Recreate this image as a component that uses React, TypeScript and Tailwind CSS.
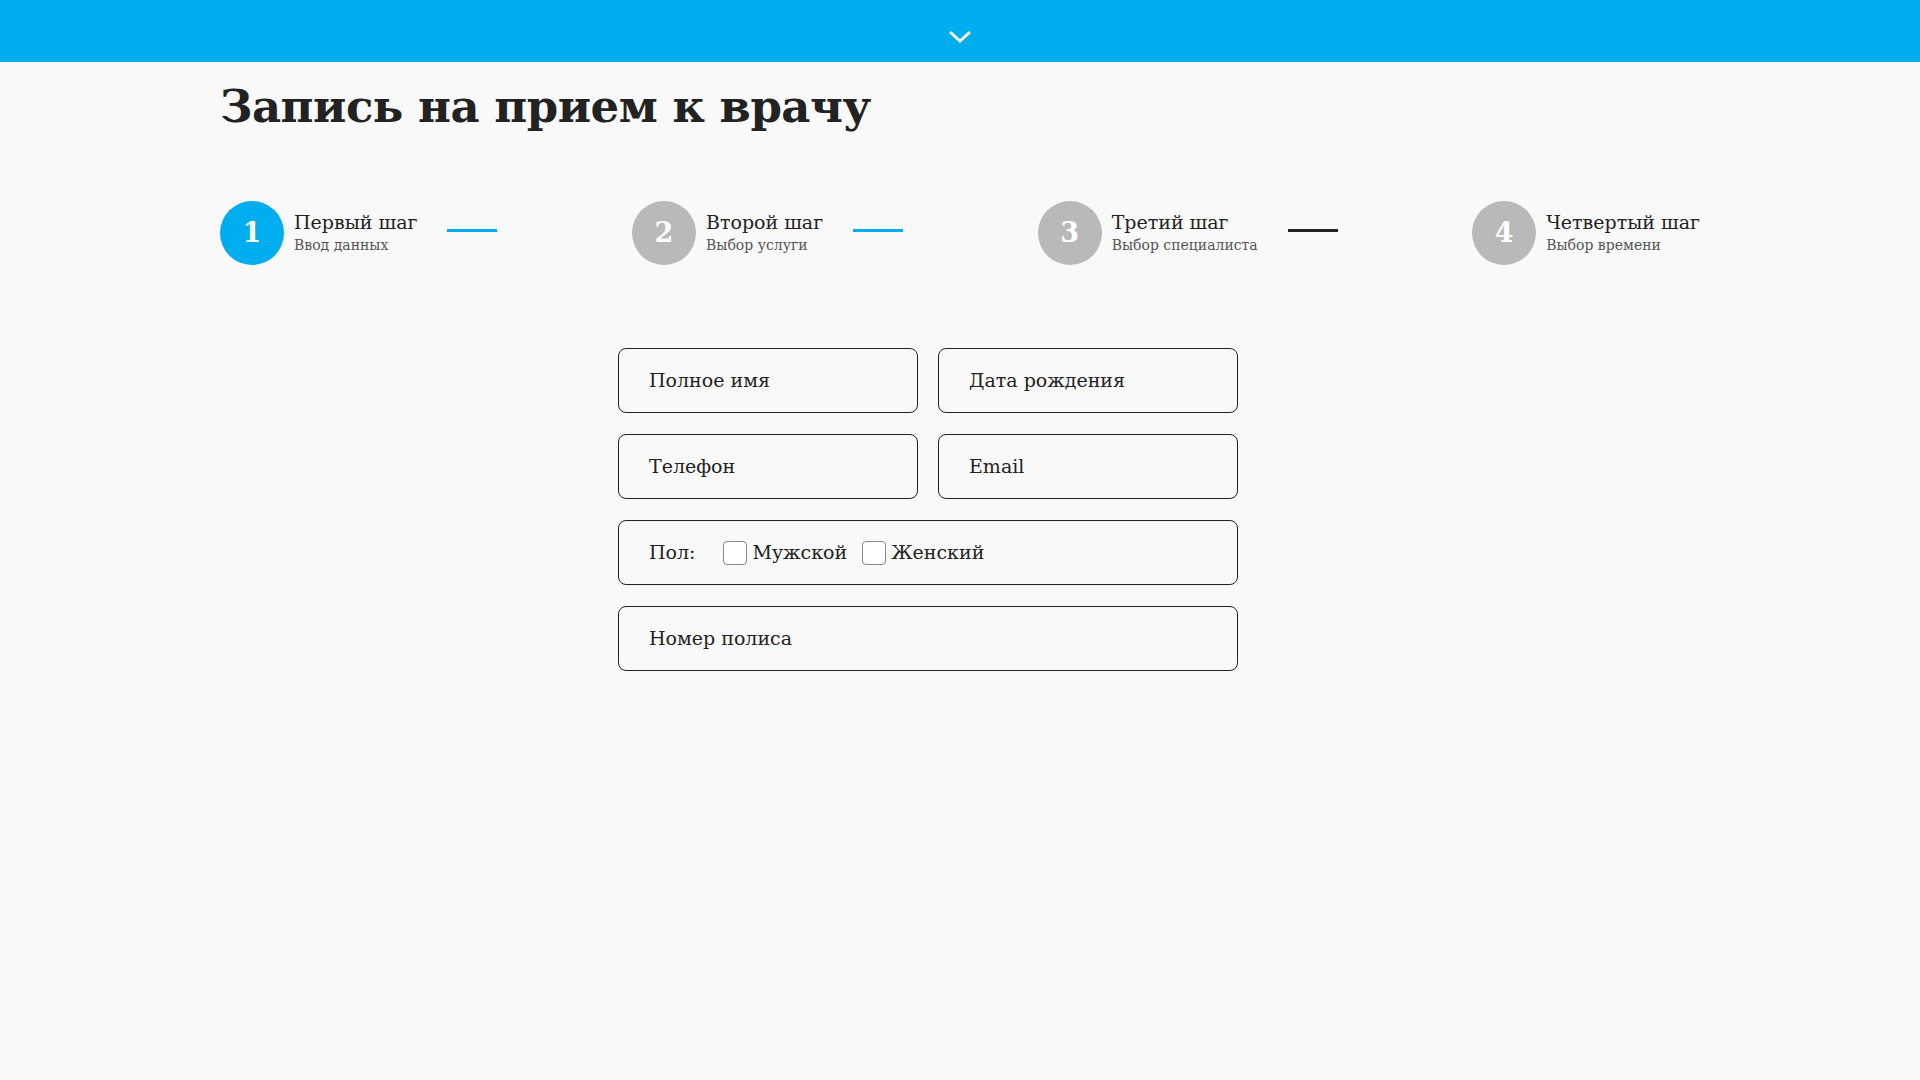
import { useState } from 'react'

const steps = [
    { n: 1, title: 'Первый шаг', sub: 'Ввод данных', line: 'blue' },
    { n: 2, title: 'Второй шаг', sub: 'Выбор услуги', line: 'blue' },
    { n: 3, title: 'Третий шаг', sub: 'Выбор специалиста', line: 'dark' },
    { n: 4, title: 'Четвертый шаг', sub: 'Выбор времени', line: null },
]

const slab = { fontFamily: '"DejaVu Serif", "Liberation Serif", serif' }

function Field({ label, wide }: { label: string; wide?: boolean }) {
    return (
        <div
            className={`flex h-[65px] items-center rounded-lg border border-[#222] pl-[30px] text-[19px] text-[#222] ${wide ? 'col-span-2' : ''}`}
        >
            {label}
        </div>
    )
}

export default function App() {
    const [male, setMale] = useState(false)
    const [female, setFemale] = useState(false)

    return (
        <div className="min-h-screen bg-[#f9f9f9]" style={slab}>
            <div className="flex h-[62px] items-center justify-center bg-[#00aeef]">
                <svg width="24" height="14" viewBox="0 0 24 14" className="mt-[12px]">
                    <path d="M2 2 L12 11 L22 2" fill="none" stroke="white" strokeWidth="3" />
                </svg>
            </div>

            <div className="mx-auto w-[1480px]">
                <h1 className="mt-[15px] text-[45px] leading-[60px] font-bold tracking-[-0.5px] text-[#222]">
                    Запись на прием к врачу
                </h1>

                <div className="mt-[64px] flex items-center justify-between">
                    {steps.map(s => (
                        <div key={s.n} className="flex items-center">
                            <div
                                className={`flex h-[64px] w-[64px] items-center justify-center rounded-full text-[27px] font-bold text-white ${s.n === 1 ? 'bg-[#00aeef]' : 'bg-[#b9b9b9]'}`}
                            >
                                {s.n}
                            </div>
                            <div className="ml-[10px] flex flex-col">
                                <span className="text-[19px] leading-[24px] text-[#222]">{s.title}</span>
                                <span className="text-[14px] leading-[22px] text-[#555]">{s.sub}</span>
                            </div>
                            {s.line && (
                                <div
                                    className={`ml-[30px] -mt-[6px] h-[3px] w-[50px] ${s.line === 'blue' ? 'bg-[#00aeef]' : 'bg-[#222]'}`}
                                />
                            )}
                        </div>
                    ))}
                </div>
            </div>

            <div className="ml-[618px] mt-[83px] grid w-[620px] grid-cols-2 gap-x-[20px] gap-y-[21px]">
                <Field label="Полное имя" />
                <Field label="Дата рождения" />
                <Field label="Телефон" />
                <Field label="Email" />
                <div className="col-span-2 flex h-[65px] items-center rounded-lg border border-[#222] pl-[30px] text-[19px] text-[#222]">
                    <span>Пол:</span>
                    <label className="ml-[28px] flex cursor-pointer items-center">
                        <input
                            type="checkbox"
                            checked={male}
                            onChange={() => setMale(!male)}
                            className="h-[24px] w-[24px] appearance-none rounded-[4px] border border-[#888] bg-white checked:bg-[#00aeef]"
                        />
                        <span className="ml-[5px]">Мужской</span>
                    </label>
                    <label className="ml-[15px] flex cursor-pointer items-center">
                        <input
                            type="checkbox"
                            checked={female}
                            onChange={() => setFemale(!female)}
                            className="h-[24px] w-[24px] appearance-none rounded-[4px] border border-[#888] bg-white checked:bg-[#00aeef]"
                        />
                        <span className="ml-[5px]">Женский</span>
                    </label>
                </div>
                <Field label="Номер полиса" wide />
            </div>
        </div>
    )
}
